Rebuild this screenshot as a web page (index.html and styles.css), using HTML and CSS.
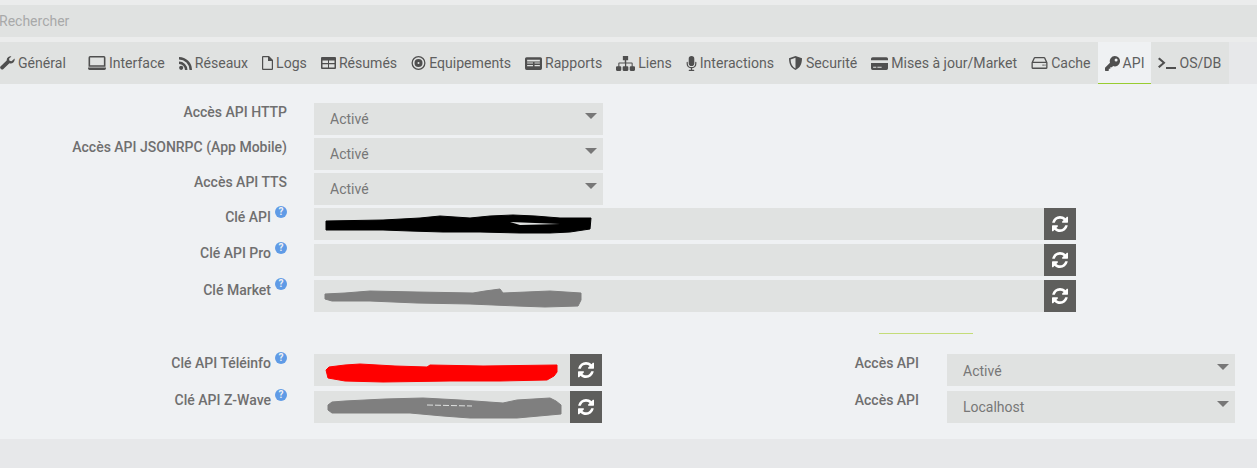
FILE: index.html
```html
<!DOCTYPE html>
<html>

<head>
    <title>Configuration API</title>
    <link rel="stylesheet" href="styles.css">
</head>

<body>

    <svg class="defs" width="0" height="0">
        <symbol id="i-refresh" viewBox="0 0 1536 1536"><path d="M1511 928q0 5-1 7-64 268-268 434.5t-478 166.5q-146 0-282.5-55t-243.5-157l-129 129q-19 19-45 19t-45-19-19-45v-448q0-26 19-45t45-19h448q26 0 45 19t19 45-19 45l-137 137q71 66 161 102t187 36q134 0 250-65t186-179q11-17 53-117 8-23 30-23h192q13 0 22.5 9.5t9.5 22.5zm25-800v448q0 26-19 45t-45 19h-448q-26 0-45-19t-19-45 19-45l138-138q-148-137-349-137-134 0-250 65t-186 179q-11 17-53 117-8 23-30 23h-199q-13 0-22.5-9.5t-9.5-22.5v-7q65-268 270-434.5t480-166.5q146 0 284 55.5t245 156.5l130-129q19-19 45-19t45 19 19 45z"/></symbol>
    </svg>

    <div class="top">
        <input class="search" type="text" placeholder="Rechercher">
    </div>

    <div class="tabs">
        <a class="tab tab-first">
            <svg width="15" height="14" viewBox="0 0 15 14"><path d="M14.6 2.6a4 4 0 0 1-5.2 4.6L3.4 13a1.7 1.7 0 0 1-2.4 0l-.3-.3a1.7 1.7 0 0 1 0-2.4l6-5.7A4 4 0 0 1 11.4.4L9 2.8l.5 2 2 .5z"/></svg>
            Général
        </a>
        <a class="tab">
            <svg width="18" height="14" viewBox="0 0 17 13"><path fill-rule="evenodd" d="M2 0h13A1.500 1.500 0 0 1 16.500 1.500V10H.5V1.500A1.500 1.500 0 0 1 2 0zM2 1.400V8.600h13V1.400zM0 10.800h17v.7A1.500 1.500 0 0 1 15.500 13h-14A1.500 1.500 0 0 1 0 11.500z"/></svg>
            Interface
        </a>
        <a class="tab">
            <svg width="13" height="13" viewBox="0 0 12 12"><circle cx="2" cy="10" r="1.900"/><path d="M0 4.200v2.300A5.500 5.500 0 0 1 5.500 12h2.300A7.800 7.800 0 0 0 0 4.200zM0 0v2.300A9.700 9.700 0 0 1 9.700 12H12A12 12 0 0 0 0 0z"/></svg>
            Réseaux
        </a>
        <a class="tab">
            <svg width="11" height="14" viewBox="0 0 11 14"><path fill-rule="evenodd" d="M1 0h6l4 4v9a1 1 0 0 1-1 1H1a1 1 0 0 1-1-1V1a1 1 0 0 1 1-1zm.200 1.200v11.600h8.600V5H6V1.200z"/></svg>
            Logs
        </a>
        <a class="tab">
            <svg width="15" height="12" viewBox="0 0 15 12"><path fill-rule="evenodd" d="M1 0h13a1 1 0 0 1 1 1v10a1 1 0 0 1-1 1H1a1 1 0 0 1-1-1V1a1 1 0 0 1 1-1zm.500 3.500v2.600H7V3.500zm6.500 0v2.600h5.500V3.500zM1.500 7.200v3.300H7V7.200zm6.500 0v3.300h5.500V7.200z"/></svg>
            Résumés
        </a>
        <a class="tab">
            <svg width="15" height="14" viewBox="0 0 15 14"><path fill-rule="evenodd" d="M7.500 0a7 7 0 1 1 0 14 7 7 0 0 1 0-14zm0 1.300a5.700 5.700 0 1 0 0 11.400 5.700 5.700 0 0 0 0-11.400zm0 1.700a4 4 0 1 1 0 8 4 4 0 0 1 0-8zm0 3a1 1 0 1 0 0 2 1 1 0 0 0 0-2z"/></svg>
            Equipements
        </a>
        <a class="tab">
            <svg width="17" height="13" viewBox="0 0 16 12"><path fill-rule="evenodd" d="M1.500 0h13A1.500 1.500 0 0 1 16 1.500v9a1.500 1.500 0 0 1-1.500 1.500h-13A1.500 1.500 0 0 1 0 10.500v-9A1.500 1.500 0 0 1 1.500 0zM2 2.500v1.500h12V2.500zM2 5v1h5.500V5zm7 0v1h5V5zM2 7.500v1h5.500v-1zm7 0v1h5v-1z"/></svg>
            Rapports
        </a>
        <a class="tab">
            <svg width="19" height="15" viewBox="0 0 18 14"><path d="M6.500 0h5v4h-1.800v2H15a.8.8 0 0 1 .8.800V9.500H17a1 1 0 0 1 1 1V13a1 1 0 0 1-1 1h-3a1 1 0 0 1-1-1v-2.500a1 1 0 0 1 1-1h.8V7H9.700v2.500h1a1 1 0 0 1 1 1V13a1 1 0 0 1-1 1H7.300a1 1 0 0 1-1-1v-2.500a1 1 0 0 1 1-1h1.200V7H3.200v2.500H4a1 1 0 0 1 1 1V13a1 1 0 0 1-1 1H1a1 1 0 0 1-1-1v-2.500a1 1 0 0 1 1-1h1.200V6.800A.8.800 0 0 1 3 6h5.300V4H6.500z"/></svg>
            Liens
        </a>
        <a class="tab">
            <svg width="11" height="15" viewBox="0 0 10 15"><path d="M5 0a2.800 2.800 0 0 1 2.800 2.800v4.400a2.800 2.800 0 0 1-5.600 0V2.800A2.800 2.800 0 0 1 5 0zM.7 5.800a.6.600 0 0 1 .6.600v1a3.700 3.700 0 0 0 7.400 0v-1a.6.600 0 0 1 1.200 0v1a4.900 4.900 0 0 1-4.300 4.800v1.500h1.600a.6.600 0 0 1 0 1.300H2.800a.6.600 0 0 1 0-1.300h1.600v-1.500A4.900 4.900 0 0 1 .1 7.400v-1a.6.600 0 0 1 .6-.6z"/></svg>
            Interactions
        </a>
        <a class="tab">
            <svg width="15" height="14" viewBox="0 0 15 14"><path fill-rule="evenodd" d="M7.500 0 14 2.300C14 8 12 12 7.500 14 3 12 1 8 1 2.300zm0 1.700L2.600 3.400c.1 4.300 1.600 7.300 4.900 9z"/></svg>
            Securité
        </a>
        <a class="tab">
            <svg width="17" height="13" viewBox="0 0 16 12"><path fill-rule="evenodd" d="M1.500 0h13A1.500 1.500 0 0 1 16 1.500V3H0V1.500A1.500 1.500 0 0 1 1.500 0zM0 5.500h16v5a1.500 1.500 0 0 1-1.500 1.500h-13A1.500 1.500 0 0 1 0 10.500zm2 3.500v1h3V9zm4 0v1h4V9z"/></svg>
            Mises à jour/Market
        </a>
        <a class="tab">
            <svg width="17" height="12" viewBox="0 0 16 12"><path fill-rule="evenodd" d="M3.500 0h9a1.500 1.500 0 0 1 1.300.8L16 5.500v5a1.500 1.500 0 0 1-1.500 1.500h-13A1.500 1.500 0 0 1 0 10.500v-5L2.200.8A1.500 1.500 0 0 1 3.500 0zm0 1.300-.2.100L1.800 4.800h12.400l-1.500-3.400-.2-.1zM1.300 6.100v4.400h13.400V6.100zM11 7.500h1.200v1.300H11zm2 0h1v1.300h-1z"/></svg>
            Cache
        </a>
        <a class="tab tab-active">
            <svg width="15" height="15" viewBox="0 0 15 15"><path fill-rule="evenodd" d="M9.800 0a5.200 5.200 0 1 1-1.700 10.100L6.900 11.300H5.300v1.500H3.800v1.700l-.5.500H.5l-.5-.5v-2.700l5-5A5.200 5.200 0 0 1 9.800 0zm1.300 2.400a1.500 1.500 0 1 0 0 3 1.500 1.500 0 0 0 0-3z"/></svg>
            API
        </a>
        <a class="tab">
            <svg width="18" height="12" viewBox="0 0 18 12"><path d="M1.500.5 7.500 5.700 1.500 11 0 9.600 4.500 5.700 0 1.900zM8 10h10v2H8z"/></svg>
            OS/DB
        </a>
    </div>

    <div class="panel">
        <div class="row">
            <label class="lbl lbl-first">Accès API HTTP</label>
            <div class="sel sel-short">Activé</div>
        </div>
        <div class="row">
            <label class="lbl">Accès API JSONRPC (App Mobile)</label>
            <div class="sel sel-short">Activé</div>
        </div>
        <div class="row">
            <label class="lbl">Accès API TTS</label>
            <div class="sel sel-short">Activé</div>
        </div>

        <div class="row">
            <label class="lbl">Clé API<span class="help">?</span></label>
            <div class="key key-long">
                <svg class="scribble" viewBox="314 208 730 32"><path fill="#000" stroke="#000" stroke-linejoin="round" d="M326 221 383 220 420 218 440 216 470 218 490 216 513 215 535 216 560 218 591 218 590 229 570 232 550 233 520 233 480 232 443 232 410 231 383 230 326 230Z"/><path fill="#e0e2e1" d="M510 222 560 224 520 225Z"/></svg>
            </div>
            <button class="renew"><svg width="16" height="16"><use href="#i-refresh"/></svg></button>
        </div>
        <div class="row row-wide">
            <label class="lbl">Clé API Pro<span class="help">?</span></label>
            <div class="key key-long"></div>
            <button class="renew"><svg width="16" height="16"><use href="#i-refresh"/></svg></button>
        </div>
        <div class="row row-wide">
            <label class="lbl lbl-market">Clé Market<span class="help">?</span></label>
            <div class="key key-long">
                <svg class="scribble" viewBox="314 280 730 32"><path fill="#7f7f7f" stroke="#7f7f7f" stroke-linejoin="round" d="M325 294 345 293 370 291 417 292 473 293 485 291 500 289 503 293 550 291 581 293 581 300 578 306 545 307 517 306 470 304 417 303 370 301 332 301 325 299Z"/></svg>
            </div>
            <button class="renew"><svg width="16" height="16"><use href="#i-refresh"/></svg></button>
        </div>

        <div class="sep"></div>

        <div class="row">
            <label class="lbl">Clé API Téléinfo<span class="help">?</span></label>
            <div class="key key-short">
                <svg class="scribble" viewBox="314 354 256 32"><path fill="#f00" stroke="#f00" stroke-linejoin="round" d="M326 370 329 367 345 365 360 364 395 366 427 367 430 365 483 366 557 365 557 372 554 376 547 380 500 381 450 381 383 382 345 381 328 378Z"/></svg>
            </div>
            <button class="renew"><svg width="16" height="16"><use href="#i-refresh"/></svg></button>
            <label class="lbl lbl-right">Accès API</label>
            <div class="sel sel-right sel-low">Activé</div>
        </div>
        <div class="row row-low">
            <label class="lbl">Clé API Z-Wave<span class="help">?</span></label>
            <div class="key key-short">
                <svg class="scribble" viewBox="314 391 256 32"><path fill="#7f7f7f" stroke="#7f7f7f" stroke-linejoin="round" d="M328 405 332 402 345 401 385 399 423 398 460 400 503 403 517 400 550 398 556 401 561 405 561 414 517 418 470 418 443 416 410 413 360 413 332 413 328 410Z"/><path stroke="#e0e2e1" stroke-dasharray="6 2" d="M427 405 472 406"/></svg>
            </div>
            <button class="renew"><svg width="16" height="16"><use href="#i-refresh"/></svg></button>
            <label class="lbl lbl-right">Accès API</label>
            <div class="sel sel-right">Localhost</div>
        </div>
    </div>

</body>

</html>
```

FILE: styles.css
```css
body {
    margin: 0;
    background-color: #e7e8ea;
    font-family: Roboto, "Liberation Sans", sans-serif;
    font-size: 14px;
    color: #555;
}

.defs {
    position: absolute;
}

.top {
    background-color: #ebecec;
    padding: 5px 0;
}

.search {
    display: block;
    box-sizing: border-box;
    width: 100%;
    height: 32px;
    border: none;
    padding: 0;
    text-indent: -1px;
    background-color: #e0e2e1;
    font-family: inherit;
    font-size: 14px;
}

.search::placeholder {
    color: #a8a9a9;
    opacity: 1;
}

.tabs {
    display: flex;
    width: 1229px;
    height: 42px;
    background-color: #e0e2e1;
}

.tab {
    display: flex;
    align-items: center;
    gap: 3px;
    padding: 0 7px;
    color: #5f5f5f;
    font-size: 14.08px;
    white-space: nowrap;
}

.tab svg {
    fill: #4f4f4f;
    flex: none;
}

.tab-first {
    padding: 0 15px 0 0;
}

.tab-active {
    background-color: #eff1f3;
    box-shadow: inset 0 -1px 0 #98cc30;
}

.panel {
    box-sizing: border-box;
    height: 355px;
    padding-top: 19px;
    background-color: #eff1f3;
}

.row {
    display: flex;
    height: 32px;
    margin-bottom: 3px;
}

.row-wide {
    margin-top: 4px;
}

.row-low {
    margin-top: 5px;
}

.lbl {
    display: flex;
    justify-content: flex-end;
    box-sizing: border-box;
    width: 287px;
    margin-right: 27px;
    line-height: 19px;
    font-weight: 500;
    color: #6f6f6f;
    white-space: nowrap;
}

.lbl-first {
    line-height: 18px;
}

.lbl-market {
    line-height: 21px;
}

.lbl-right {
    width: 317px;
    margin-right: 28px;
}

.help {
    width: 12px;
    height: 12px;
    margin: -2px 0 0 4px;
    border-radius: 50%;
    background-color: #5f9be6;
    color: #eff1f3;
    font-size: 10px;
    font-weight: 700;
    line-height: 12px;
    text-align: center;
}

.sel {
    position: relative;
    box-sizing: border-box;
    height: 32px;
    padding: 7px 0 0 16px;
    line-height: 18px;
    background-color: #e0e2e1;
    color: #777;
}

.sel-low {
    padding-top: 8px;
}

.sel::after {
    content: "";
    position: absolute;
    top: 10px;
    right: 6px;
    border-style: solid;
    border-width: 6px 6px 0;
    border-color: #777 transparent transparent;
}

.sel-short {
    width: 289px;
}

.sel-right {
    width: 288px;
}

.key {
    position: relative;
    height: 32px;
    background-color: #e0e2e1;
}

.key-long {
    width: 730px;
}

.key-short {
    width: 256px;
}

.scribble {
    position: absolute;
    top: 0;
    left: 0;
    width: 100%;
    height: 100%;
}

.renew {
    display: flex;
    align-items: center;
    justify-content: center;
    width: 32px;
    height: 32px;
    border: none;
    padding: 0;
    background-color: #5e5e5c;
}

.renew svg {
    fill: #fff;
}

.sep {
    width: 94px;
    height: 1px;
    margin: 21px 0 20px 879px;
    background-color: #c4dc78;
}
```
